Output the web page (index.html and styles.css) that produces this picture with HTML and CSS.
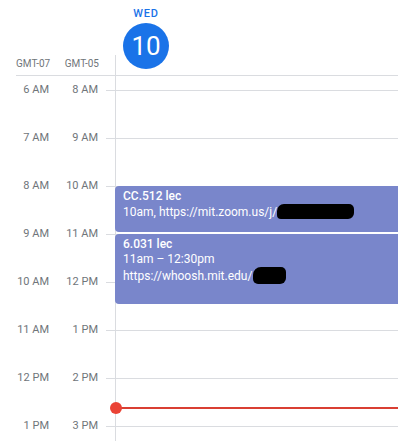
FILE: index.html
```html
<!DOCTYPE html>
<html lang="en">
<head>
    <meta charset="UTF-8">
    <meta name="viewport" content="width=device-width, initial-scale=1.0">
    <title>Calendar - Wednesday</title>
    <link rel="stylesheet" href="styles.css">
</head>
<body>

    <div class="header">
        <div class="tz">
            <span class="tz-a">GMT-07</span>
            <span class="tz-b">GMT-05</span>
        </div>
        <div class="day-head">
            <div class="dow">WED</div>
            <div class="date">10</div>
        </div>
    </div>

    <div class="timeline">
        <div class="gutter">
            <div class="labels col-a">
                <div class="hour">6 AM</div>
                <div class="hour">7 AM</div>
                <div class="hour">8 AM</div>
                <div class="hour">9 AM</div>
                <div class="hour">10 AM</div>
                <div class="hour">11 AM</div>
                <div class="hour">12 PM</div>
                <div class="hour">1 PM</div>
            </div>
            <div class="labels col-b">
                <div class="hour">8 AM</div>
                <div class="hour">9 AM</div>
                <div class="hour">10 AM</div>
                <div class="hour">11 AM</div>
                <div class="hour">12 PM</div>
                <div class="hour">1 PM</div>
                <div class="hour">2 PM</div>
                <div class="hour">3 PM</div>
            </div>
        </div>

        <div class="hours">
            <div class="day">
                <div class="event ev-short">
                    <div class="title">CC.512 lec</div>
                    <div>10am, https://mit.zoom.us/j/<span class="redact r1"></span></div>
                </div>
                <div class="event ev-long">
                    <div class="title">6.031 lec</div>
                    <div>11am – 12:30pm</div>
                    <div>https://whoosh.mit.edu/<span class="redact r2"></span></div>
                </div>
                <div class="now"></div>
            </div>
        </div>
    </div>

</body>
</html>
```

FILE: styles.css
```css
body {
    margin: 0;
    font-family: Roboto, "Liberation Sans", sans-serif;
    background-color: #fff;
    overflow: hidden;
}

/* header */
.header {
    display: flex;
    height: 75px;
    margin-left: 16px;
    border-bottom: 1px solid #dadce0;
}
.tz {
    display: flex;
    align-items: flex-end;
    width: 83px;
    padding-bottom: 5px;
    box-sizing: border-box;
    font-size: 10px;
    line-height: 12px;
    color: #70757a;
    white-space: nowrap;
}
.tz-a {
    width: 34px;
    text-align: right;
}
.tz-b {
    width: 49px;
    text-align: right;
}
.day-head {
    flex: 1;
    margin-left: 16px;
    padding: 6px 0 0 8px;
    background: linear-gradient(#dadce0, #dadce0) no-repeat 0 55px / 1px 20px;
}
.dow {
    width: 46px;
    margin-bottom: 1px;
    text-align: center;
    font-size: 11px;
    line-height: 16px;
    font-weight: 500;
    letter-spacing: 0.8px;
    color: #1a73e8;
}
.date {
    width: 46px;
    height: 46px;
    border-radius: 50%;
    background-color: #1a73e8;
    color: white;
    font-size: 26px;
    line-height: 46px;
    text-align: center;
}

/* grid */
.timeline {
    display: flex;
    height: 365px;
    overflow: hidden;
}
.gutter {
    display: flex;
    width: 98px;
}
.labels {
    width: 49px;
    padding-top: 8px;
    text-align: right;
    font-size: 11px;
    line-height: 12px;
    color: #70757a;
}
.hour {
    height: 48px;
}
.hours {
    flex: 1;
    display: flex;
    margin-left: 8px;
    padding-left: 9px;
    background-image: linear-gradient(to bottom, #dadce0 1px, transparent 1px);
    background-size: 100% 48px;
    background-position: 0 14px;
}
.day {
    flex: 1;
    min-width: 0;
    position: relative;
    padding-top: 110px;
    border-left: 1px solid #dadce0;
}

/* events */
.event {
    margin: 0 -6px 2px -1px;
    padding: 3px 8px;
    box-sizing: border-box;
    border-radius: 4px;
    background-color: #7986cb;
    color: white;
    font-size: 12px;
    line-height: 15px;
    white-space: nowrap;
    overflow: hidden;
}
.ev-short {
    height: 46px;
}
.ev-long {
    height: 70px;
}
.title {
    font-weight: 500;
}
.redact {
    display: inline-block;
    background-color: #000;
}
.r1 {
    width: 77px;
    height: 15px;
    border-radius: 7px 5px 6px 4px;
    vertical-align: -3px;
}
.r2 {
    width: 33px;
    height: 17px;
    margin-left: 1px;
    border-radius: 8px 5px 6px 5px;
    vertical-align: -4px;
}

/* current time */
.now {
    position: absolute;
    top: 331px;
    left: -1px;
    right: 0;
    height: 2px;
    background-color: #d93f33;
}
.now::before {
    content: "";
    position: absolute;
    left: -5px;
    top: -5px;
    width: 12px;
    height: 12px;
    border-radius: 50%;
    background-color: #ea4335;
}
```
